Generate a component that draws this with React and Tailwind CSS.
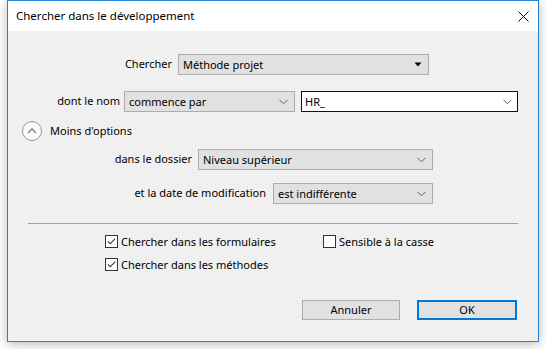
import React from "react";

const font = { fontFamily: '"Noto Sans", "Open Sans", sans-serif' };

function Chevron() {
  return (
    <svg width="9" height="6" viewBox="0 0 9 6" className="shrink-0">
      <path d="M0.5 0.8 L4.5 4.8 L8.5 0.8" fill="none" stroke="#606060" strokeWidth="1" />
    </svg>
  );
}

function Triangle() {
  return (
    <svg width="8" height="5" viewBox="0 0 8 5" className="shrink-0">
      <path d="M0.5 0.5 L7.5 0.5 L4 4.5 Z" fill="#000" />
    </svg>
  );
}

function Select({ text, width, solid }) {
  return (
    <div
      className="h-[21px] flex items-center justify-between border border-[#adadad] bg-[#e1e1e1] pl-[4px] pr-[6px] text-[11px] text-black"
      style={{ width }}
    >
      <span className="leading-none">{text}</span>
      {solid ? <Triangle /> : <Chevron />}
    </div>
  );
}

function Checkbox({ checked, label }) {
  return (
    <div className="flex items-center gap-[3px] h-[13px]">
      <div className="w-[13px] h-[13px] border border-[#333] bg-white flex items-center justify-center">
        {checked && (
          <svg width="11" height="11" viewBox="0 0 11 11">
            <path d="M1.8 5.3 L4.3 7.8 L9.2 2.6" fill="none" stroke="#333" strokeWidth="1.1" />
          </svg>
        )}
      </div>
      <span className="text-[11px] text-black leading-none">{label}</span>
    </div>
  );
}

export default function App() {
  return (
    <div className="w-[546px] h-[349px] bg-white overflow-hidden" style={font}>
      <div className="ml-[7px] w-[532px] h-[342px] border border-[#2383d6] bg-[#f0f0f0] flex flex-col shadow-[0_2px_10px_rgba(0,0,0,0.28)]">
        {/* Title bar */}
        <div className="h-[30px] bg-white flex items-center justify-between pl-[8px] pr-[9px] shrink-0">
          <span className="text-[11.5px] text-black">Chercher dans le développement</span>
          <svg width="11" height="11" viewBox="0 0 11 11">
            <path d="M0.5 0.5 L10.5 10.5 M10.5 0.5 L0.5 10.5" stroke="#000" strokeWidth="1" />
          </svg>
        </div>

        {/* Row 1 */}
        <div className="flex items-center mt-[23px]">
          <div className="w-[164px] text-right text-[11px] text-black">Chercher</div>
          <div className="ml-[6px]">
            <Select text="Méthode projet" width={251} solid />
          </div>
        </div>

        {/* Row 2 */}
        <div className="flex items-center mt-[16px]">
          <div className="w-[112px] text-right text-[11px] text-black">dont le nom</div>
          <div className="ml-[4px]">
            <Select text="commence par" width={171} />
          </div>
          <div className="ml-[6px] w-[217px] h-[21px] border border-[#111] bg-white flex items-center justify-between pl-[3px] pr-[5px]">
            <span className="text-[11px] text-black leading-none">HR_</span>
            <Chevron />
          </div>
        </div>

        {/* Row 3 */}
        <div className="flex items-center mt-[9px] pl-[14px] h-[20px]">
          <svg width="20" height="20" viewBox="0 0 20 20">
            <circle cx="10" cy="10" r="9.5" fill="#fbfbfb" stroke="#9a9a9a" strokeWidth="1" />
            <path d="M6 11.8 L10 7.8 L14 11.8" fill="none" stroke="#6a6a6a" strokeWidth="1.2" />
          </svg>
          <span className="ml-[8px] text-[11px] text-black">Moins d'options</span>
        </div>

        {/* Row 4 */}
        <div className="flex items-center mt-[8px]">
          <div className="w-[184px] text-right text-[11px] text-black">dans le dossier</div>
          <div className="ml-[6px]">
            <Select text="Niveau supérieur" width={235} />
          </div>
        </div>

        {/* Row 5 */}
        <div className="flex items-center mt-[13px]">
          <div className="w-[258px] text-right text-[11px] text-black">et la date de modification</div>
          <div className="ml-[7px]">
            <Select text="est indifférente" width={160} />
          </div>
        </div>

        {/* Separator */}
        <div className="mt-[19px] ml-[20px] w-[490px] h-px bg-[#a0a0a0]" />

        {/* Checkboxes */}
        <div className="flex mt-[11px] pl-[97px]">
          <div className="w-[218px]">
            <Checkbox checked label="Chercher dans les formulaires" />
          </div>
          <Checkbox label="Sensible à la casse" />
        </div>
        <div className="flex mt-[10px] pl-[97px]">
          <Checkbox checked label="Chercher dans les méthodes" />
        </div>

        {/* Buttons */}
        <div className="flex justify-end mt-[29px] pr-[21px] gap-[17px]">
          <div className="w-[98px] h-[20px] border border-[#adadad] bg-[#e1e1e1] flex items-center justify-center text-[11px] text-black">
            Annuler
          </div>
          <div className="w-[100px] h-[20px] border-2 border-[#0078d7] bg-[#e1e1e1] flex items-center justify-center text-[11px] text-black">
            OK
          </div>
        </div>
      </div>
    </div>
  );
}
